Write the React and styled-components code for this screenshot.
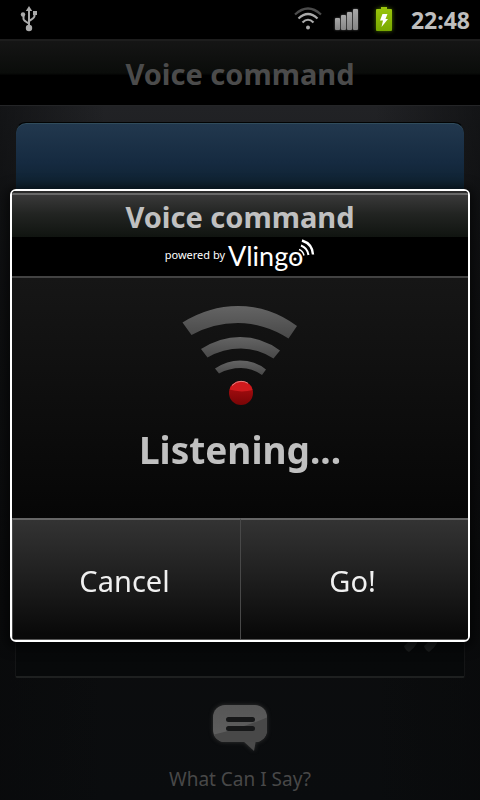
import React from "react";
import styled, { createGlobalStyle } from "styled-components";

const GlobalStyle = createGlobalStyle`
  * { box-sizing: border-box; }
  body {
    margin: 0;
    background: #000;
    font-family: "Noto Sans", "Open Sans", sans-serif;
  }
`;

const Screen = styled.div`
  min-height: 100vh;
  display: flex;
  flex-direction: column;
  overflow: hidden;
`;

const StatusBar = styled.header`
  height: 39px;
  flex: none;
  display: flex;
  align-items: center;
  padding: 0 10px 2px 20px;
  background: #000;
`;

const StatusIcons = styled.div`
  margin-left: auto;
  display: flex;
  align-items: center;
`;

const Clock = styled.time`
  margin-left: 18px;
  padding-top: 2px;
  font-size: 23px;
  line-height: 36px;
  font-weight: 700;
  color: #bebebe;
`;

const TitleBar = styled.div`
  flex: none;
  height: 67px;
  border-top: 2px solid #1d1d1d;
  border-bottom: 1px solid #242527;
  background: linear-gradient(#151515, #0a0c0a 50%, #000 54%);
  text-align: center;
`;

const Title = styled.h1`
  margin: 0;
  font-size: 29px;
  line-height: 66px;
  font-weight: 700;
  color: #4b4b4b;
`;

const Content = styled.main`
  flex: 1;
  display: flex;
  flex-direction: column;
  padding: 16px 15px 4px;
  background:
    linear-gradient(90deg, rgba(8, 9, 10, 0.55), transparent 22% 78%, rgba(8, 9, 10, 0.55)),
    linear-gradient(#212225, #17181a 25%, #0c0d0e 70%, #0a0c0e);
`;

const Panel = styled.section`
  flex: 1;
  display: flex;
  align-items: flex-end;
  justify-content: flex-end;
  padding: 0 23px 24px;
  border: 1px solid #020303;
  border-color: #020303 #141516 #1e2020;
  border-bottom-width: 2px;
  border-radius: 11px 11px 2px 2px;
  box-shadow: inset 0 1px 0 #304c5c;
  background: linear-gradient(#22384e, #152a40 40px, #0d202d 68px, #08131b 120px, #070809 60%, #07090a);
`;

const Footer = styled.a`
  flex: none;
  height: 118px;
  display: flex;
  flex-direction: column;
  align-items: center;
  padding-top: 22px;
  color: #484848;
  text-decoration: none;
  font-size: 19px;
  line-height: 30px;
`;

const SpeechIcon = styled.svg`
  display: block;
  margin-bottom: 12px;
  filter: drop-shadow(0 0 2px #333);
`;

const Overlay = styled.div`
  position: fixed;
  inset: 38px 0 0;
  display: flex;
  align-items: center;
  padding: 0 10px 7px;
`;

const Dialog = styled.section`
  flex: 1;
  border: 2px solid #fff;
  border-radius: 6px;
  overflow: hidden;
  background: #0a0a0a;
  box-shadow: 0 2px 12px 4px rgba(0, 0, 0, 0.6);
`;

const DialogHeader = styled.div`
  height: 87px;
  border-bottom: 2px solid #424242;
  background: linear-gradient(#2b2b2b 2px, #686868 2px 4px, #393939 4px, #222422 50%, #101410 100%) top / 100% 46px no-repeat #000;
`;

const DialogTitle = styled.h2`
  margin: 0;
  padding-top: 4px;
  font-size: 29px;
  line-height: 44px;
  font-weight: 700;
  color: #c0c0c0;
  text-align: center;
`;

const PoweredBy = styled.div`
  height: 34px;
  display: flex;
  align-items: center;
  justify-content: center;
  gap: 3px;
  color: #fff;
  font-size: 11px;
  line-height: 14px;
`;

const PoweredText = styled.span`
  padding-bottom: 2px;
`;

const Brand = styled.span`
  display: flex;
  align-items: center;
  font-family: Lato, sans-serif;
  font-size: 27px;
  line-height: 34px;
`;

const BrandMark = styled.svg`
  margin-left: -15px;
  margin-top: -4px;
`;

const DialogBody = styled.div`
  height: 240px;
  display: flex;
  flex-direction: column;
  align-items: center;
  padding-top: 26px;
  background: linear-gradient(#161616, #060606);
`;

const Listening = styled.p`
  margin: 14px 0 0;
  font-size: 37px;
  line-height: 60px;
  font-weight: 700;
  color: #c0c0c0;
`;

const Actions = styled.div`
  display: grid;
  grid-template-columns: 1fr 1fr;
  border-bottom: 1px solid #555;
`;

const ActionButton = styled.button`
  height: 121px;
  margin: 0;
  padding: 2px 4px 0 0;
  border: 0;
  border-top: 2px solid #656565;
  border-left: 1px solid #484848;
  background: linear-gradient(#333, #202020 45%, #090909 96%);
  color: #f0f0f0;
  font-family: inherit;
  font-size: 29px;
  line-height: 40px;
`;

const UsbIcon = () => (
  <svg width="18" height="27" viewBox="0 0 18 27" fill="none" stroke="#aaa" strokeWidth="2" aria-label="USB">
    <path d="M9 5v17M3.500 9v5q0 1.500 5.500 4.500M14.500 7v4q0 2-5.500 5" />
    <g fill="#aaa" stroke="none">
      <path d="M9 1l3.200 5H5.800z" />
      <circle cx="9" cy="23" r="3.200" />
      <circle cx="3" cy="9.500" r="2.200" />
      <rect x="13" y="6" width="4" height="4" />
    </g>
  </svg>
);

const WifiIcon = () => (
  <svg width="28" height="23" viewBox="0 0 28 23" fill="none" strokeWidth="2.200" aria-label="Wi-Fi">
    <path d="M1 7.500Q14-4.500 27 7.500" stroke="#4b4b4b" />
    <path d="M4.500 11.500Q14 2.500 23.500 11.500" stroke="#aaa" />
    <path d="M8.500 15.500Q14 10 19.500 15.500" stroke="#aaa" />
    <circle cx="14" cy="20.500" r="2" fill="#aaa" />
  </svg>
);

const SignalIcon = styled.svg`
  margin-left: 12px;
  filter: drop-shadow(0 0 1px #555);
`;

const BatteryIcon = styled.svg`
  margin-left: 16px;
  filter: drop-shadow(0 0 2px #4d7300);
`;

export default function App() {
  return (
    <>
      <GlobalStyle />
      <Screen>
        <StatusBar>
          <UsbIcon />
          <StatusIcons>
            <WifiIcon />
            <SignalIcon width="25" height="22" viewBox="0 0 25 22" aria-label="Signal">
              <defs>
                <linearGradient id="bars" x1="0" y1="0" x2="0" y2="1">
                  <stop offset="0" stopColor="#a8a8a8" />
                  <stop offset="1" stopColor="#858585" />
                </linearGradient>
              </defs>
              <g fill="url(#bars)">
                <rect x="1" y="10" width="5" height="12" rx="1" />
                <rect x="7" y="7" width="5" height="15" rx="1" />
                <rect x="13" y="4" width="5" height="18" rx="1" />
                <rect x="19" y="1" width="5" height="21" rx="1" />
              </g>
            </SignalIcon>
            <BatteryIcon width="18" height="24" viewBox="0 0 18 24" aria-label="Battery charging">
              <defs>
                <linearGradient id="cell" x1="0" y1="0" x2="0" y2="1">
                  <stop offset="0" stopColor="#9cc60c" />
                  <stop offset="1" stopColor="#78a800" />
                </linearGradient>
              </defs>
              <path d="M6 0h6v2h4q1 0 1 1v20q0 1-1 1H2q-1 0-1-1V3q0-1 1-1h4z" fill="url(#cell)" />
              <path d="M7.500 7h5l-2 5H13L6.500 20l1.500-6.500H5z" fill="#fff" />
            </BatteryIcon>
            <Clock>22:48</Clock>
          </StatusIcons>
        </StatusBar>
        <TitleBar>
          <Title>Voice command</Title>
        </TitleBar>
        <Content>
          <Panel>
            <svg width="37" height="20" viewBox="0 0 37 20" fill="#1c1e1f" aria-hidden="true">
              <path d="M0 14Q7 9 7 0h9Q15 13 5 20Q1 18 0 14zM20 14Q27 9 27 0h9Q35 13 25 20Q21 18 20 14z" />
            </svg>
          </Panel>
          <Footer href="#help">
            <SpeechIcon width="56" height="52" viewBox="0 0 56 52" aria-hidden="true">
              <defs>
                <linearGradient id="bubble" x1="0" y1="0" x2="0" y2="1">
                  <stop offset="0" stopColor="#565656" />
                  <stop offset="1" stopColor="#606060" />
                </linearGradient>
                <clipPath id="bubbleClip">
                  <rect x="1" y="5" width="54" height="37" rx="12" />
                </clipPath>
              </defs>
              <path d="M30 40l12 11 2-11z" fill="#4a4a4a" />
              <rect x="1" y="5" width="54" height="37" rx="12" fill="url(#bubble)" />
              <path d="M0 35Q28 29 56 17V44H0z" fill="#484848" clipPath="url(#bubbleClip)" />
              <path d="M16.500 19.500h24M16.500 28.500h24" stroke="#161718" strokeWidth="5" strokeLinecap="round" />
            </SpeechIcon>
            What Can I Say?
          </Footer>
        </Content>
      </Screen>
      <Overlay>
        <Dialog role="dialog" aria-labelledby="dialog-title">
          <DialogHeader>
            <DialogTitle id="dialog-title">Voice command</DialogTitle>
            <PoweredBy>
              <PoweredText>powered by</PoweredText>
              <Brand>
                Vlingo
                <BrandMark width="27" height="30" viewBox="0 0 27 30" fill="none" stroke="#fff" aria-hidden="true">
                  <circle cx="7" cy="20" r="1.600" fill="#fff" stroke="none" />
                  <path d="M11 10.500Q15 12 16 16.500" strokeWidth="1.500" />
                  <path d="M13 6.500Q19.500 9 20.500 16" strokeWidth="2" />
                  <path d="M14 1.500Q24.500 5 25 15.500" strokeWidth="2.400" />
                </BrandMark>
              </Brand>
            </PoweredBy>
          </DialogHeader>
          <DialogBody>
            <svg width="116" height="102" viewBox="0 0 116 102" aria-hidden="true">
              <defs>
                <linearGradient id="arc" x1="0" y1="0" x2="0" y2="1">
                  <stop offset="0" stopColor="#646464" />
                  <stop offset="1" stopColor="#484848" />
                </linearGradient>
                <linearGradient id="ball" x1="0" y1="0" x2="0" y2="1">
                  <stop offset="0" stopColor="#b50f12" />
                  <stop offset="1" stopColor="#780506" />
                </linearGradient>
                <clipPath id="ballClip">
                  <circle cx="59" cy="89" r="12" />
                </clipPath>
              </defs>
              <g fill="url(#arc)">
                <path d="M0.500 18.500Q27 2 56 2Q88 2 115 22L106.500 34.500Q82 19 56 19Q31 19 9.500 31z" />
                <path d="M19 45Q38 33 58 33Q80 33 98 46.500L91.500 54.500Q76 44.500 59 44.500Q41 44.500 25.500 53.500z" />
                <path d="M33 64.500Q45 56.500 58 56.500Q73 56.500 84 65.500L80 71Q70 64 59 64Q47 64 37 69.500z" />
              </g>
              <circle cx="59" cy="89" r="12" fill="url(#ball)" />
              <path d="M45 74h28v11.500Q59 89.500 45 85z" fill="#cf1a1d" clipPath="url(#ballClip)" />
              <path d="M50 81.500Q54 77.300 59 77.300Q63 77.300 66 79.300" fill="none" stroke="#e58080" strokeWidth="1" />
            </svg>
            <Listening role="status">Listening...</Listening>
          </DialogBody>
          <Actions>
            <ActionButton type="button">Cancel</ActionButton>
            <ActionButton type="button">Go!</ActionButton>
          </Actions>
        </Dialog>
      </Overlay>
    </>
  );
}
